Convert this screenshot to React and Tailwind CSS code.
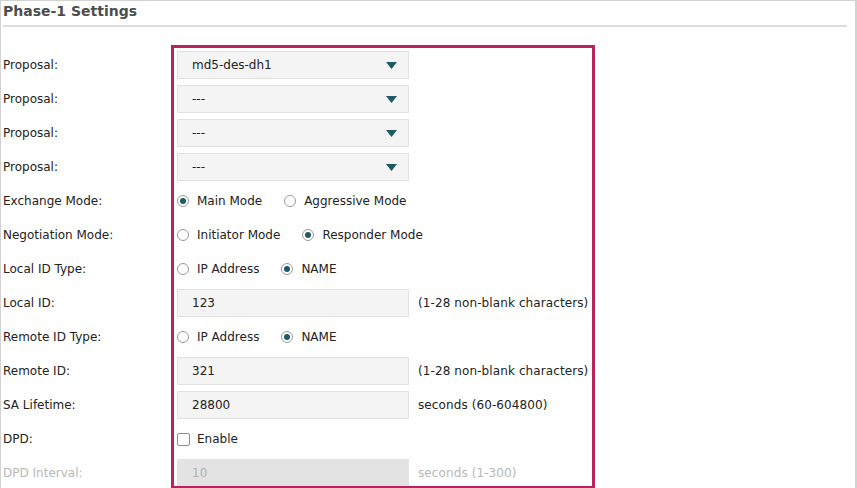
import React from 'react';

const Caret = () => (
  <svg width="11" height="7" viewBox="0 0 11 7" className="shrink-0">
    <path d="M0 0 H11 L5.5 7 Z" fill="#1d5a66" />
  </svg>
);

const Select = ({ value }) => (
  <div className="w-[232px] h-[28px] bg-[#f4f4f4] border border-[#e2e2e2] flex items-center justify-between pl-[14px] pr-[11px] text-[#222]">
    <span>{value}</span>
    <Caret />
  </div>
);

const TextBox = ({ value, disabled }) => (
  <div
    className={
      disabled
        ? 'w-[232px] h-[28px] bg-[#e3e3e3] border border-[#e3e3e3] flex items-center pl-[14px] text-[#b0b0b0]'
        : 'w-[232px] h-[28px] bg-[#f4f4f4] border border-[#e2e2e2] flex items-center pl-[14px] text-[#222]'
    }
  >
    {value}
  </div>
);

const Radio = ({ checked, label }) => (
  <div className="flex items-center mr-[22px]">
    <span className="w-[12px] h-[12px] rounded-full border border-[#9a9a9a] bg-white flex items-center justify-center mr-[8px]">
      {checked && <span className="w-[6px] h-[6px] rounded-full bg-[#1d5a66]" />}
    </span>
    <span>{label}</span>
  </div>
);

const Row = ({ label, disabled, children }) => (
  <div className="flex items-center h-[34px]">
    <div className={disabled ? 'w-[174px] text-[#b8b8b8]' : 'w-[174px] text-[#222]'}>{label}</div>
    <div className="flex items-center text-[#222]">{children}</div>
  </div>
);

const Hint = ({ children, disabled }) => (
  <span className={disabled ? 'ml-[9px] tracking-[0.1px] text-[#b8b8b8]' : 'ml-[9px] tracking-[0.1px] text-[#222]'}>{children}</span>
);

export default function App() {
  return (
    <div
      className="relative w-[857px] h-[488px] bg-white border-l border-t border-r-2 border-[#d2d2d2] overflow-hidden text-[12px]"
      style={{ fontFamily: '"DejaVu Sans", Verdana, sans-serif' }}
    >
      <div className="mx-[2px] mr-[8px] h-[26px] border-b-2 border-[#dcdcdc] pt-[1px]">
        <h2 className="text-[14px] font-bold text-[#4d4d4d] leading-[18px]">Phase-1 Settings</h2>
      </div>

      <div className="pl-[2px] pt-[21px]">
        <Row label="Proposal:"><Select value="md5-des-dh1" /></Row>
        <Row label="Proposal:"><Select value="---" /></Row>
        <Row label="Proposal:"><Select value="---" /></Row>
        <Row label="Proposal:"><Select value="---" /></Row>
        <Row label="Exchange Mode:">
          <Radio checked label="Main Mode" />
          <Radio label="Aggressive Mode" />
        </Row>
        <Row label="Negotiation Mode:">
          <Radio label="Initiator Mode" />
          <Radio checked label="Responder Mode" />
        </Row>
        <Row label="Local ID Type:">
          <Radio label="IP Address" />
          <Radio checked label="NAME" />
        </Row>
        <Row label="Local ID:">
          <TextBox value="123" />
          <Hint>(1-28 non-blank characters)</Hint>
        </Row>
        <Row label="Remote ID Type:">
          <Radio label="IP Address" />
          <Radio checked label="NAME" />
        </Row>
        <Row label="Remote ID:">
          <TextBox value="321" />
          <Hint>(1-28 non-blank characters)</Hint>
        </Row>
        <Row label="SA Lifetime:">
          <TextBox value="28800" />
          <Hint>seconds (60-604800)</Hint>
        </Row>
        <Row label="DPD:">
          <span className="w-[13px] h-[13px] border border-[#8f8f8f] rounded-[2px] bg-white mr-[7px]" />
          <span>Enable</span>
        </Row>
        <Row label="DPD Interval:" disabled>
          <TextBox value="10" disabled />
          <Hint disabled>seconds (1-300)</Hint>
        </Row>
      </div>

      <div className="absolute left-[170px] top-[44px] w-[424px] h-[444px] border-[3px] border-[#b7245f] pointer-events-none" />
    </div>
  );
}
